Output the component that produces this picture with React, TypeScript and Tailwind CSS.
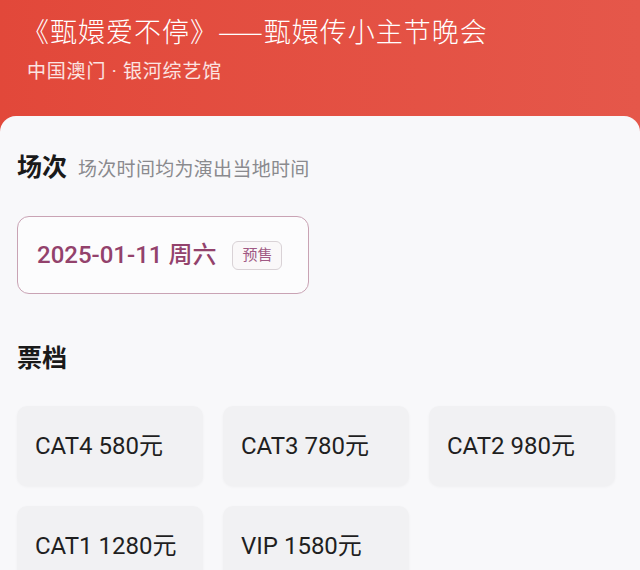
import React from 'react';

const tickets = ['CAT4 580元', 'CAT3 780元', 'CAT2 980元', 'CAT1 1280元', 'VIP 1580元'];

export default function App() {
  return (
    <div
      className="w-[640px] h-[570px] overflow-hidden bg-gradient-to-r from-[#e2483a] to-[#e5574a]"
      style={{ fontFamily: 'Roboto, "Noto Sans CJK SC", sans-serif' }}
    >
      <div className="px-[22px] pt-[11px] h-[116px]">
        <h1
          className="text-[27px] leading-[40px] font-light text-white tracking-[1px]"
          style={{ fontFamily: '"Noto Sans CJK SC", sans-serif' }}
        >
          《甄嬛爱不停》——甄嬛传小主节晚会
        </h1>
        <p className="mt-[8px] pl-[5px] text-[19px] leading-[26px] text-white/85 tracking-[0.8px]">
          中国澳门 · 银河综艺馆
        </p>
      </div>

      <div className="bg-[#f8f8fa] rounded-t-2xl h-[454px] px-[17px] pt-[34px]">
        <div className="flex items-baseline gap-[11px]">
          <span className="text-[25px] leading-[36px] font-bold text-[#1a1a1a]">场次</span>
          <span className="text-[19px] text-[#8a8a8e] tracking-[0.3px]">场次时间均为演出当地时间</span>
        </div>

        <div className="mt-[30px] w-[292px] h-[78px] border border-[#c9a3b4] rounded-xl flex items-center pl-[19px] bg-white/60">
          <span className="text-[24px] font-medium text-[#93426c]">2025-01-11 周六</span>
          <span className="ml-[16px] px-[9px] h-[29px] flex items-center border border-[#d9d2d6] rounded-md text-[15px] text-[#a05884] bg-[#faf8f9]">
            预售
          </span>
        </div>

        <div className="mt-[47px] text-[25px] leading-[36px] font-bold text-[#1a1a1a]">票档</div>

        <div className="mt-[29px] grid grid-cols-3 gap-x-[20px] gap-y-[20px] w-[598px]">
          {tickets.map((t) => (
            <div
              key={t}
              className="h-[80px] rounded-[10px] bg-[#f1f1f3] shadow-[0_1px_3px_rgba(0,0,0,0.04)] flex items-center pl-[18px] text-[24px] text-[#1f1f1f]"
            >
              {t}
            </div>
          ))}
        </div>
      </div>
    </div>
  );
}
